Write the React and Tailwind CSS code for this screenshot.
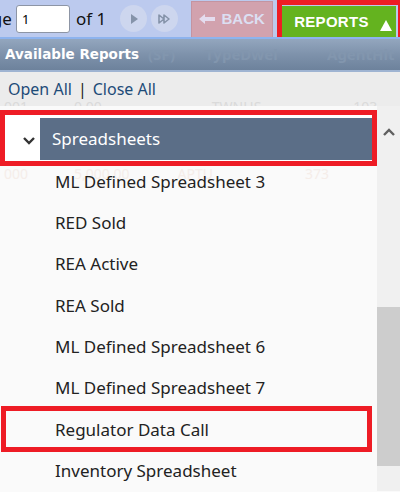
import React from "react";

const reports = [
  "ML Defined Spreadsheet 3",
  "RED Sold",
  "REA Active",
  "REA Sold",
  "ML Defined Spreadsheet 6",
  "ML Defined Spreadsheet 7",
  "Regulator Data Call",
  "Inventory Spreadsheet",
];

const RoundButton = ({ children }) => (
  <div className="w-[27px] h-[27px] shrink-0 rounded-full bg-[#cdd6ee] flex items-center justify-center">
    {children}
  </div>
);

const Toolbar = () => (
  <div className="h-[39px] bg-[#bccaee] flex items-center overflow-hidden border-b-2 border-[#8db3ee] whitespace-nowrap">
    <span className="ml-[-28px] shrink-0 text-[17px] text-[#111]">Page</span>
    <input
      type="text"
      readOnly
      value="1"
      className="ml-[4px] shrink-0 w-[54px] h-[28px] bg-white border border-[#8d95a5] rounded-[3px] px-[5px] text-[13px] text-black"
    />
    <span className="ml-[6px] shrink-0 text-[17px] text-[#111]">of 1</span>
    <div className="ml-[14px] shrink-0 flex gap-[4px]">
      <RoundButton>
        <svg width="10" height="12" viewBox="0 0 10 12">
          <path d="M2 1 L9 6 L2 11 Z" fill="#8593a9" />
        </svg>
      </RoundButton>
      <RoundButton>
        <svg width="14" height="12" viewBox="0 0 14 12">
          <path d="M1 2 L6 6 L1 10 Z M6 2 L11 6 L6 10 Z" fill="none" stroke="#8593a9" strokeWidth="1.6" strokeLinejoin="round" />
        </svg>
      </RoundButton>
    </div>
    <div className="ml-[13px] shrink-0 w-[82px] h-[37px] mt-[1px] bg-[#d2a2ae] border border-[#c494a1] flex items-center justify-center gap-[5px]">
      <svg width="17" height="10" viewBox="0 0 17 10">
        <path d="M0 5 L6 0 L6 3 L16 3 L16 7 L6 7 L6 10 Z" fill="#e4dcee" />
      </svg>
      <span className="text-[15px] font-bold text-[#dcdff2] font-['Liberation_Sans',sans-serif]">BACK</span>
    </div>
    <div className="ml-[4px] shrink-0 w-[126px] h-[43px] self-start border-[5px] border-[#ee1c25] flex">
      <div className="mt-[1px] w-[114px] h-[32px] bg-[#64b31f] flex items-center pl-[12px] pr-[4px] justify-between">
        <span className="text-[15px] font-bold text-white tracking-[0.3px] font-['Liberation_Sans',sans-serif]">REPORTS</span>
        <svg width="12" height="11" viewBox="0 0 12 11" className="mt-[6px]">
          <path d="M6 0 L12 11 L0 11 Z" fill="#fff" />
        </svg>
      </div>
    </div>
  </div>
);

export default function App() {
  return (
    <div className="w-[400px] h-[492px] overflow-hidden bg-[#fafafa] font-['Noto_Sans',sans-serif] relative">
      <Toolbar />
      <div className="h-[33px] bg-gradient-to-b from-[#93a6be] via-[#7e92ab] to-[#6d829c] border-b-2 border-[#9fb4d2] flex items-center relative overflow-hidden">
        <span className="absolute left-[148px] text-[15px] font-bold text-[#8296ae]">(SF)</span>
        <span className="absolute left-[205px] text-[15px] font-bold text-[#8296ae]">TypeDwel</span>
        <span className="absolute left-[327px] text-[15px] font-bold text-[#8296ae]">AgentHit</span>
        <span className="relative pl-[5px] text-[13.5px] font-bold text-white font-['DejaVu_Sans',sans-serif]">
          Available Reports
        </span>
      </div>
      <div className="h-[34px] bg-[#ececec] relative overflow-hidden flex items-center pl-[8px] text-[16px] text-[#1d4b78]">
        <div className="absolute left-0 right-0 top-[24px] flex text-[14px] text-[#dadada]">
          <span className="ml-[4px]">001</span>
          <span className="ml-[46px]">0.00</span>
          <span className="ml-[110px]">TWNHS</span>
          <span className="ml-[92px]">103</span>
        </div>
        <span className="relative">Open All</span>
        <span className="relative mx-[6px] text-[#222]">|</span>
        <span className="relative">Close All</span>
      </div>
      <div className="flex">
        <div className="flex-1 pt-[4px]">
          <div className="w-[377px] h-[56px] border-[5px] border-[#ee1c25] bg-white flex">
            <svg width="14" height="10" viewBox="0 0 14 10" className="ml-[17px] mt-[21px] shrink-0">
              <path d="M2 2 L7 7 L12 2" fill="none" stroke="#333" strokeWidth="2.4" />
            </svg>
            <div className="ml-[4px] flex-1 h-[42px] mt-[3px] bg-[#5b6e87] flex items-center pl-[12px] text-[17px] text-white">
              Spreadsheets
            </div>
          </div>
          <div className="relative mt-[-5px]">
            <div className="absolute left-0 top-[2px] flex text-[14px] text-[#f5ede9]">
              <span className="ml-[4px]">000</span>
              <span className="ml-[46px]">5,000.00</span>
              <span className="ml-[48px]">APTU</span>
              <span className="ml-[92px]">373</span>
            </div>
            {reports.map((name) => (
              <div key={name} className="h-[41.3px] flex items-center pl-[55px] text-[17px] text-[#222] relative">
                {name === "Regulator Data Call" && (
                  <div className="absolute left-[1px] w-[371px] top-[-3px] h-[46px] border-[5px] border-[#ee1c25]" />
                )}
                <span className="relative">{name}</span>
              </div>
            ))}
          </div>
        </div>
        <div className="w-[26px] bg-[#f0f0f0] flex flex-col items-center">
          <svg width="14" height="10" viewBox="0 0 14 10" className="mt-[21px]">
            <path d="M2 8 L7 3 L12 8" fill="none" stroke="#606060" strokeWidth="2.4" />
          </svg>
          <div className="mt-[170px] w-full h-[159px] bg-[#cdcdcd]" />
        </div>
      </div>
    </div>
  );
}
